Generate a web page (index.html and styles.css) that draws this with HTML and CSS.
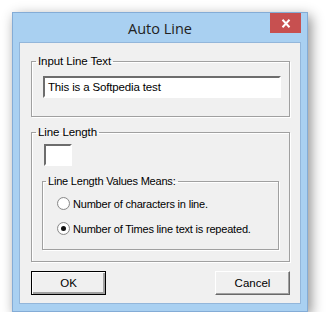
FILE: index.html
```html
<!DOCTYPE html>
<html lang="en">

<head>
    <meta charset="UTF-8">
    <title>Auto Line</title>
    <link rel="stylesheet" href="styles.css">
</head>

<body>
    <div class="window">
        <div class="titlebar">
            <span></span>
            <span class="title">Auto Line</span>
            <span class="close">
                <svg width="10" height="9" viewBox="0 0 10 9">
                    <path d="M1.5 0.8 L8.5 8.2 M8.5 0.8 L1.5 8.2" stroke="#fff" stroke-width="2" />
                </svg>
            </span>
        </div>

        <div class="client">
            <!-- Input text group -->
            <fieldset class="group group-input">
                <legend>Input Line Text</legend>
                <div class="textbox">This is a Softpedia test</div>
            </fieldset>

            <!-- Line length group -->
            <fieldset class="group group-length">
                <legend>Line Length</legend>
                <div class="numbox"></div>

                <fieldset class="group group-means">
                    <legend>Line Length Values Means:</legend>
                    <label class="option">
                        <span class="radio"></span>
                        <span>Number of characters in line.</span>
                    </label>
                    <label class="option">
                        <span class="radio checked"></span>
                        <span>Number of Times line text is repeated.</span>
                    </label>
                </fieldset>
            </fieldset>

            <div class="buttons">
                <button class="btn default">OK</button>
                <button class="btn">Cancel</button>
            </div>
        </div>
    </div>
</body>
</html>
```

FILE: styles.css
```css
body {
    margin: 0;
    background: #fff;
    font-family: 'Liberation Sans', Arial, sans-serif;
    font-size: 11px;
    color: #000;
}

.window {
    margin: 12px 0 0 12px;
    width: 296px;
    height: 300px;
    box-sizing: border-box;
    border: 1px solid #84acd6;
    background: #a9d0f1;
    box-shadow: 3px 4px 12px rgba(0, 0, 0, 0.45);
    display: flex;
    flex-direction: column;
}

.titlebar {
    height: 29px;
    display: grid;
    grid-template-columns: 1fr auto 1fr;
}

.title {
    font-family: 'Open Sans', sans-serif;
    font-size: 14.5px;
    color: #222;
    line-height: 29px;
    padding-top: 1px;
}

.close {
    justify-self: end;
    margin-right: 6px;
    width: 31px;
    height: 20px;
    background: #c75050;
    display: flex;
    align-items: center;
    justify-content: center;
}

.client {
    flex: 1;
    margin: 0 6px 7px 6px;
    background: #f0f0f0;
    border: 1px solid #93b6da;
    padding: 0 10px 0 11px;
    display: flex;
    flex-direction: column;
}

.group {
    margin: 0;
    border: 1px solid #a0a0a0;
    box-shadow: 1px 1px 0 #fff, inset 1px 1px 0 #fff;
    min-width: 0;
}

.group legend {
    padding: 0 2px;
    line-height: 13px;
    white-space: nowrap;
    font-size: 11.5px;
    letter-spacing: -0.1px;
}

.group-input {
    margin-top: 12px;
    padding: 8px 8px 18px 11px;
}

.group-input > legend {
    margin-left: -7px;
}

.textbox {
    height: 22px;
    box-sizing: border-box;
    background: #fff;
    border: 2px solid;
    border-color: #6d6d6d #fff #fff #6d6d6d;
    padding: 0 3px;
    line-height: 18px;
    font-size: 11.5px;
    letter-spacing: -0.15px;
}

.group-length {
    margin-top: 9px;
    padding: 5px 10px 11px 12px;
}

.group-length > legend {
    margin-left: -8px;
}

.numbox {
    width: 28px;
    height: 22px;
    box-sizing: border-box;
    background: #fff;
    border: 2px solid;
    border-color: #6d6d6d #fff #fff #6d6d6d;
}

.group-means {
    margin-top: 9px;
    margin-left: -2px;
    padding: 7px 8px 12px 14px;
    display: flex;
    flex-direction: column;
    gap: 8px;
}

.group-means > legend {
    margin-left: -11px;
    font-size: 11px;
    letter-spacing: -0.2px;
}

.option {
    display: flex;
    align-items: center;
    gap: 3px;
    height: 17px;
    white-space: nowrap;
    letter-spacing: -0.2px;
}

.radio {
    flex: none;
    width: 11px;
    height: 11px;
    border-radius: 50%;
    border: 1px solid #8a8a8a;
    background: radial-gradient(circle, #fff 55%, #e6e6e6 100%);
    display: flex;
    align-items: center;
    justify-content: center;
}

.radio.checked::after {
    content: "";
    width: 5px;
    height: 5px;
    border-radius: 50%;
    background: #111;
}

.buttons {
    margin-top: 9px;
    display: flex;
    justify-content: space-between;
}

.btn {
    width: 75px;
    height: 24px;
    margin: 0;
    padding: 0;
    font-family: 'Liberation Sans', Arial, sans-serif;
    font-size: 11.5px;
    color: #000;
    background: #f0f0f0;
    border: 1px solid;
    border-color: #fff #696969 #696969 #fff;
    box-shadow: inset -1px -1px 0 #a0a0a0;
}

.btn.default {
    border: 1px solid #000;
    box-shadow: inset 1px 1px 0 #fff, inset -2px -2px 0 #a0a0a0;
}
```
